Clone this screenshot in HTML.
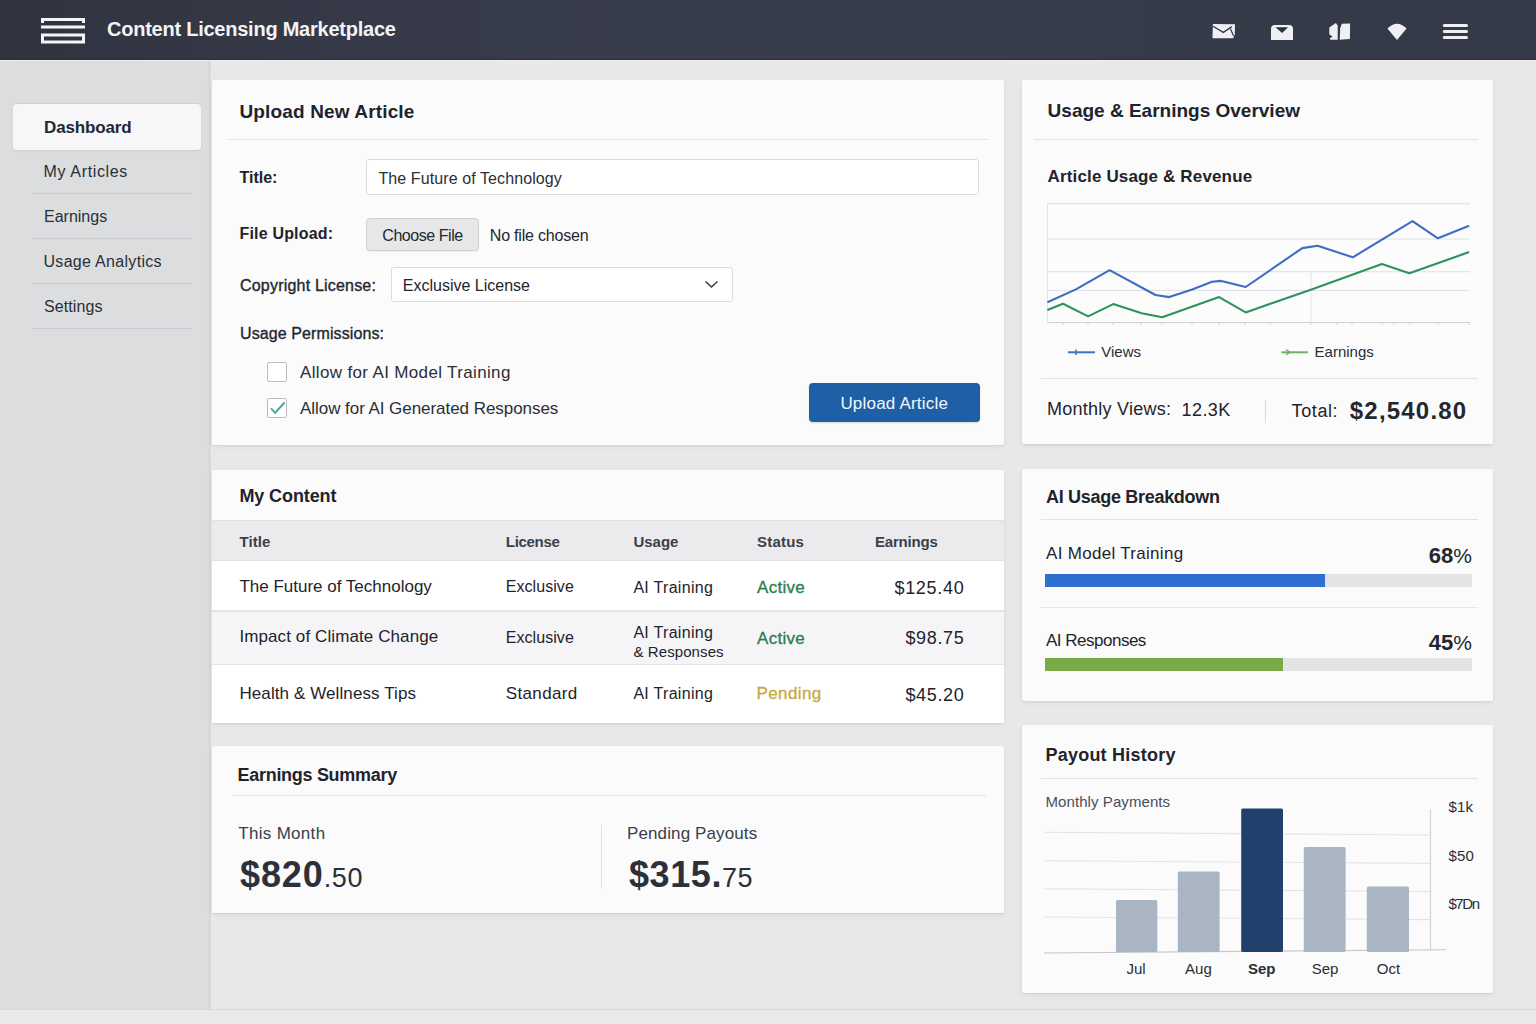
<!DOCTYPE html>
<html><head><meta charset="utf-8"><title>Content Licensing Marketplace</title>
<style>
html,body{margin:0;padding:0;}
body{width:1536px;height:1024px;position:relative;overflow:hidden;background:#e7e8eb;font-family:"Liberation Sans",sans-serif;}
.t{position:absolute;white-space:nowrap;}
.r{position:absolute;}
</style></head><body>
<div class="r" style="left:0px;top:60px;width:211px;height:950px;background:#dcdddf;"></div>
<div class="r" style="left:208px;top:60px;width:3px;height:950px;background:#d8d9db;"></div>
<div class="r" style="left:211px;top:60px;width:2px;height:950px;background:#eaeaec;"></div>
<div class="r" style="left:213px;top:60px;width:1323px;height:950px;background:#e8e8ea;"></div>
<div class="r" style="left:0px;top:1009px;width:1536px;height:1.2px;background:#d9d9dc;"></div>
<div class="r" style="left:0px;top:1010px;width:1536px;height:14px;background:#e9e9eb;"></div>
<div class="r" style="left:0px;top:0px;width:1536px;height:60px;background:linear-gradient(90deg,#30343f 0%,#363a48 25%,#383d4c 50%,#363b4a 75%,#343948 100%);border-bottom:1px solid #2a2e3a;box-sizing:border-box;"></div>
<div class="r" style="left:0px;top:60px;width:1536px;height:1px;background:#eff0f2;"></div>
<svg class="r" style="left:0;top:0" width="120" height="60"><g fill="#f4f5f7"><rect x="41" y="18" width="44" height="3"/><rect x="41" y="18" width="3" height="5"/><rect x="82" y="18" width="3" height="5"/><rect x="41" y="25.5" width="44" height="3"/></g><rect x="42.5" y="35" width="41" height="7" fill="none" stroke="#f4f5f7" stroke-width="3"/></svg>
<div class="t" style="left:107px;top:15.67px;font-size:20px;line-height:26px;color:#f2f3f5;font-weight:700;letter-spacing:-0.24px;">Content Licensing Marketplace</div>
<svg class="r" style="left:1200px;top:0" width="336" height="60"><g fill="#eef0f3"><path d="M12.9 24 L35 24.3 L34.8 34.2 L33.2 38.2 L12.5 38.2 Z"/><path d="M13 26.3 L23.3 32.4 L31.9 26.6" fill="none" stroke="#353a48" stroke-width="1.3"/><path d="M30.4 28.8 L33.6 36" fill="none" stroke="#353a48" stroke-width="1.2"/><path d="M71 40 L71 29 Q71 25 75 25 L89 25 Q93 25 93 29 L93 40 Z"/><path d="M75.4 27.3 L88 27.3 L82.2 33.1 Z" fill="#2b303c"/><path d="M135.9 23.1 L137.7 25.6 L137.7 39.8 L130.3 39.8 L129.8 38.3 L132.6 36.8 L129.3 34.2 L129.3 27.4 Z"/><path d="M141.8 23.8 L150.1 23.6 L149.9 39.1 L139.7 39.8 L140.2 28.2 Z"/><path d="M187.4 28.5 Q197 19 206.6 28.5 L197 40 Z"/><rect x="242.8" y="24" width="25.2" height="3" rx="1.5"/><rect x="242.8" y="30" width="25.2" height="3" rx="1.5"/><rect x="242.8" y="36" width="25.2" height="3" rx="1.5"/></g></svg>
<div class="r" style="left:13px;top:104px;width:188px;height:46px;background:#f7f7f9;border-radius:4px;box-shadow:0 -1px 1px rgba(0,0,0,0.06),0 1px 2px rgba(0,0,0,0.08);"></div>
<div class="t" style="left:44px;top:116.81px;font-size:17px;line-height:22px;color:#23272f;font-weight:700;letter-spacing:-0.15px;">Dashboard</div>
<div class="t" style="left:43.5px;top:161.36px;font-size:16px;line-height:21px;color:#2a2e36;letter-spacing:0.65px;">My Articles</div>
<div class="t" style="left:44px;top:206.16px;font-size:16px;line-height:21px;color:#2a2e36;">Earnings</div>
<div class="t" style="left:43.5px;top:250.96px;font-size:16px;line-height:21px;color:#2a2e36;letter-spacing:0.3px;">Usage Analytics</div>
<div class="t" style="left:44px;top:295.96px;font-size:16px;line-height:21px;color:#2a2e36;letter-spacing:0.1px;">Settings</div>
<div class="r" style="left:32px;top:193px;width:160px;height:1.2px;background:#cbccd0;"></div>
<div class="r" style="left:32px;top:238px;width:160px;height:1.2px;background:#cbccd0;"></div>
<div class="r" style="left:32px;top:283px;width:160px;height:1.2px;background:#cbccd0;"></div>
<div class="r" style="left:32px;top:328px;width:160px;height:1.2px;background:#cbccd0;"></div>
<div class="r" style="left:212px;top:80px;width:792px;height:365px;background:#fbfbfb;box-shadow:0 1px 2px rgba(0,0,0,0.07),0 2px 6px rgba(0,0,0,0.05);border-radius:2px;"></div>
<div class="t" style="left:239.5px;top:99.12px;font-size:19px;line-height:25px;color:#1f232b;font-weight:700;letter-spacing:0.14px;">Upload New Article</div>
<div class="r" style="left:227px;top:138.5px;width:761px;height:1.2px;background:#e3e3e6;"></div>
<div class="t" style="left:239.5px;top:167.26px;font-size:16px;line-height:21px;color:#1f232b;font-weight:700;">Title:</div>
<div class="r" style="left:366px;top:159px;width:613px;height:36px;background:#ffffff;border:1px solid #dadbde;border-radius:3px;box-sizing:border-box;"></div>
<div class="t" style="left:378.4px;top:167.76px;font-size:16px;line-height:21px;color:#2a2e36;letter-spacing:0.1px;">The Future of Technology</div>
<div class="t" style="left:239.5px;top:223.26px;font-size:16px;line-height:21px;color:#1f232b;font-weight:700;letter-spacing:0.18px;">File Upload:</div>
<div class="r" style="left:366px;top:218px;width:113px;height:33px;background:#e7e7e9;border:1px solid #d0d0d3;box-shadow:0 1px 1px rgba(0,0,0,0.06);border-radius:4px;box-sizing:border-box;"></div>
<div class="t" style="left:382.3px;top:224.56px;font-size:16px;line-height:21px;color:#23272f;letter-spacing:-0.45px;">Choose File</div>
<div class="t" style="left:489.8px;top:224.56px;font-size:16px;line-height:21px;color:#23272f;letter-spacing:-0.2px;">No file chosen</div>
<div class="t" style="left:240px;top:275.16px;font-size:16px;line-height:21px;color:#23272f;letter-spacing:0.2px;-webkit-text-stroke:0.35px #23272f;">Copyright License:</div>
<div class="r" style="left:391px;top:267px;width:342px;height:35px;background:#ffffff;border:1px solid #dadbde;border-radius:3px;box-sizing:border-box;"></div>
<div class="t" style="left:402.8px;top:274.76px;font-size:16px;line-height:21px;color:#1f232b;">Exclusive License</div>
<svg class="r" style="left:700px;top:275px" width="24" height="20"><path d="M5.5 6.5 L11.5 12 L17.5 6.5" fill="none" stroke="#3a3f48" stroke-width="1.6"/></svg>
<div class="t" style="left:240px;top:323.36px;font-size:16px;line-height:21px;color:#23272f;letter-spacing:0.1px;-webkit-text-stroke:0.35px #23272f;">Usage Permissions:</div>
<div class="r" style="left:267px;top:362px;width:20px;height:20px;background:#ffffff;border:1px solid #b9bbc0;border-radius:2px;box-sizing:border-box;"></div>
<div class="t" style="left:300px;top:361.91px;font-size:17px;line-height:22px;color:#2a2e36;letter-spacing:0.35px;">Allow for AI Model Training</div>
<div class="r" style="left:267px;top:398px;width:20px;height:20px;background:#ffffff;border:1px solid #b9bbc0;border-radius:2px;box-sizing:border-box;"></div>
<svg class="r" style="left:267px;top:398px" width="20" height="20"><path d="M4 10.3 L8.2 14.8 L17.5 4.5" fill="none" stroke="#45a596" stroke-width="1.9"/></svg>
<div class="t" style="left:300px;top:398.11px;font-size:17px;line-height:22px;color:#2a2e36;letter-spacing:-0.05px;">Allow for AI Generated Responses</div>
<div class="r" style="left:809px;top:383px;width:171px;height:38.5px;background:#1f5fa6;border-radius:4px;box-shadow:0 1px 2px rgba(0,0,0,0.15);"></div>
<div class="t" style="left:840.4px;top:392.51px;font-size:17px;line-height:22px;color:#f4f7fb;letter-spacing:0.2px;">Upload Article</div>
<div class="r" style="left:1021.5px;top:80px;width:471px;height:364px;background:#fbfbfb;box-shadow:0 1px 2px rgba(0,0,0,0.07),0 2px 6px rgba(0,0,0,0.05);border-radius:2px;"></div>
<div class="t" style="left:1047.6px;top:98.32px;font-size:19px;line-height:25px;color:#1f232b;font-weight:700;">Usage &amp; Earnings Overview</div>
<div class="r" style="left:1034px;top:139px;width:444px;height:1.2px;background:#e3e3e6;"></div>
<div class="t" style="left:1047.6px;top:165.71px;font-size:17px;line-height:22px;color:#1f232b;font-weight:700;letter-spacing:0.15px;">Article Usage &amp; Revenue</div>
<svg class="r" style="left:1030px;top:190px" width="460" height="150"><rect x="17.4" y="13.8" width="422.6" height="118.7" fill="#fcfcfd"/><line x1="17.4" x2="440" y1="13.800000000000011" y2="13.800000000000011" stroke="#dfe0e3" stroke-width="1"/><line x1="17.4" x2="440" y1="49" y2="49" stroke="#dfe0e3" stroke-width="1"/><line x1="17.4" x2="440" y1="81.69999999999999" y2="81.69999999999999" stroke="#dfe0e3" stroke-width="1"/><line x1="17.4" x2="440" y1="100.39999999999998" y2="100.39999999999998" stroke="#dfe0e3" stroke-width="1"/><line x1="17.4" x2="17.4" y1="13.8" y2="132.5" stroke="#dfe0e3" stroke-width="1"/><line x1="281" x2="281" y1="81" y2="132.5" stroke="#e4e5e8" stroke-width="1"/><line x1="17.4" x2="440" y1="132.5" y2="132.5" stroke="#cfd0d4" stroke-width="1.2"/><line x1="33" x2="33" y1="132.5" y2="135" stroke="#d5d6da" stroke-width="1"/><line x1="58" x2="58" y1="132.5" y2="135" stroke="#d5d6da" stroke-width="1"/><line x1="83" x2="83" y1="132.5" y2="135" stroke="#d5d6da" stroke-width="1"/><line x1="111" x2="111" y1="132.5" y2="135" stroke="#d5d6da" stroke-width="1"/><line x1="132" x2="132" y1="132.5" y2="135" stroke="#d5d6da" stroke-width="1"/><line x1="162" x2="162" y1="132.5" y2="135" stroke="#d5d6da" stroke-width="1"/><line x1="189" x2="189" y1="132.5" y2="135" stroke="#d5d6da" stroke-width="1"/><line x1="215" x2="215" y1="132.5" y2="135" stroke="#d5d6da" stroke-width="1"/><line x1="240" x2="240" y1="132.5" y2="135" stroke="#d5d6da" stroke-width="1"/><line x1="281" x2="281" y1="132.5" y2="135" stroke="#d5d6da" stroke-width="1"/><line x1="307" x2="307" y1="132.5" y2="135" stroke="#d5d6da" stroke-width="1"/><line x1="322" x2="322" y1="132.5" y2="135" stroke="#d5d6da" stroke-width="1"/><line x1="352" x2="352" y1="132.5" y2="135" stroke="#d5d6da" stroke-width="1"/><line x1="364" x2="364" y1="132.5" y2="135" stroke="#d5d6da" stroke-width="1"/><line x1="380" x2="380" y1="132.5" y2="135" stroke="#d5d6da" stroke-width="1"/><line x1="408" x2="408" y1="132.5" y2="135" stroke="#d5d6da" stroke-width="1"/><line x1="439" x2="439" y1="132.5" y2="135" stroke="#d5d6da" stroke-width="1"/><polyline points="17.4,112.3 45.9,99.4 79.6,80.2 125.5,105.0 139.2,107.1 162.2,99.4 182.0,91.8 191.3,90.9 215.7,97.0 272.3,58.1 287.6,55.7 322.8,67.3 382.5,31.2 407.9,48.3 439.1,35.8" fill="none" stroke="#3b6ec2" stroke-width="2.1" stroke-linejoin="round"/><polyline points="17.4,120.0 33.0,113.8 58.1,126.4 83.2,114.1 111.7,123.3 132.2,127.3 189.1,107.1 215.7,122.4 281.5,99.4 351.9,74.0 379.4,83.2 439.1,62.1" fill="none" stroke="#2b935e" stroke-width="2.1" stroke-linejoin="round"/></svg>
<svg class="r" style="left:1060px;top:340px" width="340" height="25"><line x1="8" x2="35" y1="12.3" y2="12.3" stroke="#3d72c6" stroke-width="2"/><line x1="16" x2="16" y1="9.5" y2="15" stroke="#3d72c6" stroke-width="1.5"/><line x1="221.5" x2="247.8" y1="12.3" y2="12.3" stroke="#6fb065" stroke-width="2"/><path d="M226 9.5 L230 12.3 L226 15" fill="none" stroke="#6fb065" stroke-width="1.3"/></svg>
<div class="t" style="left:1101.3px;top:342.30px;font-size:15px;line-height:20px;color:#2a2e36;">Views</div>
<div class="t" style="left:1314.6px;top:342.30px;font-size:15px;line-height:20px;color:#2a2e36;">Earnings</div>
<div class="r" style="left:1041px;top:378px;width:437px;height:1.2px;background:#e3e3e6;"></div>
<div class="t" style="left:1047px;top:397.96px;font-size:18px;line-height:23px;color:#1f232b;letter-spacing:0.25px;">Monthly Views:</div>
<div class="t" style="left:1181.5px;top:399.46px;font-size:18px;line-height:23px;color:#1f232b;letter-spacing:0.45px;">12.3K</div>
<div class="r" style="left:1265px;top:400px;width:1px;height:23px;background:#d9dadd;"></div>
<div class="t" style="left:1291.6px;top:400.06px;font-size:18px;line-height:23px;color:#1f232b;letter-spacing:0.6px;">Total:</div>
<div class="t" style="left:1349.8px;top:394.88px;font-size:24px;line-height:31px;color:#23272f;font-weight:700;letter-spacing:1.2px;">$2,540.80</div>
<div class="r" style="left:212px;top:470px;width:792px;height:253px;background:#fbfbfb;box-shadow:0 1px 2px rgba(0,0,0,0.07),0 2px 6px rgba(0,0,0,0.05);border-radius:2px;overflow:hidden;"></div>
<div class="t" style="left:239.4px;top:484.66px;font-size:18px;line-height:23px;color:#1f232b;font-weight:700;letter-spacing:-0.1px;">My Content</div>
<div class="r" style="left:212px;top:519.5px;width:792px;height:41px;background:#ebebee;border-top:1px solid #e1e1e4;border-bottom:1px solid #e1e1e4;box-sizing:border-box;"></div>
<div class="t" style="left:239.4px;top:531.50px;font-size:15px;line-height:20px;color:#3a404b;font-weight:700;letter-spacing:0.1px;">Title</div>
<div class="t" style="left:505.8px;top:531.50px;font-size:15px;line-height:20px;color:#3a404b;font-weight:700;letter-spacing:-0.3px;">License</div>
<div class="t" style="left:633.4px;top:531.50px;font-size:15px;line-height:20px;color:#3a404b;font-weight:700;">Usage</div>
<div class="t" style="left:757px;top:531.50px;font-size:15px;line-height:20px;color:#3a404b;font-weight:700;letter-spacing:0.2px;">Status</div>
<div class="t" style="left:875px;top:531.50px;font-size:15px;line-height:20px;color:#3a404b;font-weight:700;letter-spacing:-0.2px;">Earnings</div>
<div class="r" style="left:212px;top:560.5px;width:792px;height:49.5px;background:#ffffff;"></div>
<div class="r" style="left:212px;top:610px;width:792px;height:1.5px;background:#e4e4e7;"></div>
<div class="r" style="left:212px;top:611.5px;width:792px;height:52px;background:#f5f5f7;"></div>
<div class="r" style="left:212px;top:663.5px;width:792px;height:1.5px;background:#e4e4e7;"></div>
<div class="r" style="left:212px;top:665px;width:792px;height:58px;background:#ffffff;"></div>
<div class="t" style="left:239.4px;top:575.61px;font-size:17px;line-height:22px;color:#1f232b;">The Future of Technology</div>
<div class="t" style="left:505.8px;top:576.46px;font-size:16px;line-height:21px;color:#1f232b;letter-spacing:0.05px;">Exclusive</div>
<div class="t" style="left:633.4px;top:576.76px;font-size:16px;line-height:21px;color:#1f232b;letter-spacing:0.3px;">AI Training</div>
<div class="t" style="left:757px;top:576.61px;font-size:17px;line-height:22px;color:#2b7d4f;letter-spacing:0.3px;-webkit-text-stroke:0.3px #2b7d4f;">Active</div>
<div class="t" style="right:571.6px;top:576.56px;font-size:18px;line-height:23px;color:#1f232b;letter-spacing:0.7px;">$125.40</div>
<div class="t" style="left:239.4px;top:626.31px;font-size:17px;line-height:22px;color:#1f232b;letter-spacing:0.1px;">Impact of Climate Change</div>
<div class="t" style="left:505.8px;top:627.16px;font-size:16px;line-height:21px;color:#1f232b;letter-spacing:0.05px;">Exclusive</div>
<div class="t" style="left:633.4px;top:621.56px;font-size:16px;line-height:21px;color:#1f232b;letter-spacing:0.3px;">AI Training</div>
<div class="t" style="left:633.4px;top:641.60px;font-size:15px;line-height:20px;color:#1f232b;letter-spacing:0.1px;">&amp; Responses</div>
<div class="t" style="left:757px;top:627.91px;font-size:17px;line-height:22px;color:#2b7d4f;letter-spacing:0.3px;-webkit-text-stroke:0.3px #2b7d4f;">Active</div>
<div class="t" style="right:571.6px;top:627.26px;font-size:18px;line-height:23px;color:#1f232b;letter-spacing:0.65px;">$98.75</div>
<div class="t" style="left:239.4px;top:682.91px;font-size:17px;line-height:22px;color:#1f232b;letter-spacing:0.1px;">Health &amp; Wellness Tips</div>
<div class="t" style="left:505.8px;top:682.91px;font-size:17px;line-height:22px;color:#1f232b;letter-spacing:0.35px;">Standard</div>
<div class="t" style="left:633.4px;top:683.46px;font-size:16px;line-height:21px;color:#1f232b;letter-spacing:0.3px;">AI Training</div>
<div class="t" style="left:756.5px;top:683.11px;font-size:17px;line-height:22px;color:#c8a745;letter-spacing:0.4px;-webkit-text-stroke:0.3px #c8a745;">Pending</div>
<div class="t" style="right:571.6px;top:683.56px;font-size:18px;line-height:23px;color:#1f232b;letter-spacing:0.65px;">$45.20</div>
<div class="r" style="left:212px;top:746px;width:792px;height:167px;background:#fbfbfb;box-shadow:0 1px 2px rgba(0,0,0,0.07),0 2px 6px rgba(0,0,0,0.05);border-radius:2px;"></div>
<div class="t" style="left:237.6px;top:764.16px;font-size:18px;line-height:23px;color:#1f232b;font-weight:700;letter-spacing:-0.3px;">Earnings Summary</div>
<div class="r" style="left:232px;top:794.5px;width:754px;height:1.2px;background:#e3e3e6;"></div>
<div class="t" style="left:238.3px;top:822.81px;font-size:17px;line-height:22px;color:#3a3f4a;letter-spacing:0.3px;">This Month</div>
<div class="t" style="left:240px;top:851.03px;font-size:36px;line-height:47px;color:#2b303b;"><span style="font-size:36px;font-weight:700;letter-spacing:0.9px">$820</span><span style="font-size:27px;letter-spacing:0.6px">.50</span></div>
<div class="r" style="left:601px;top:825px;width:1.2px;height:64px;background:#e0e1e4;"></div>
<div class="t" style="left:627px;top:823.11px;font-size:17px;line-height:22px;color:#3a3f4a;letter-spacing:0.12px;">Pending Payouts</div>
<div class="t" style="left:629px;top:851.03px;font-size:36px;line-height:47px;color:#2b303b;"><span style="font-size:36px;font-weight:700;letter-spacing:0.6px">$315.</span><span style="font-size:27px;letter-spacing:0.3px">75</span></div>
<div class="r" style="left:1022px;top:469px;width:471px;height:231.5px;background:#fbfbfb;box-shadow:0 1px 2px rgba(0,0,0,0.07),0 2px 6px rgba(0,0,0,0.05);border-radius:2px;"></div>
<div class="t" style="left:1046px;top:486.06px;font-size:18px;line-height:23px;color:#1f232b;font-weight:700;letter-spacing:-0.3px;">AI Usage Breakdown</div>
<div class="r" style="left:1041px;top:518.5px;width:437px;height:1.2px;background:#e3e3e6;"></div>
<div class="t" style="left:1046px;top:543.11px;font-size:17px;line-height:22px;color:#1f232b;letter-spacing:0.3px;">AI Model Training</div>
<div class="t" style="right:64px;top:541px;line-height:30px;color:#23272f;"><span style="font-size:22px;font-weight:700">68</span><span style="font-size:21px">%</span></div>
<div class="r" style="left:1045.3px;top:573.7px;width:427px;height:13px;background:#e3e4e6;"></div>
<div class="r" style="left:1045.3px;top:573.7px;width:279.7px;height:13px;background:#2f6fd1;"></div>
<div class="r" style="left:1041px;top:607px;width:437px;height:1.2px;background:#e6e6e9;"></div>
<div class="t" style="left:1046px;top:629.71px;font-size:17px;line-height:22px;color:#1f232b;letter-spacing:-0.5px;">AI Responses</div>
<div class="t" style="right:64px;top:628px;line-height:30px;color:#23272f;"><span style="font-size:22px;font-weight:700">45</span><span style="font-size:21px">%</span></div>
<div class="r" style="left:1045.3px;top:658px;width:427px;height:12.6px;background:#e3e4e6;"></div>
<div class="r" style="left:1045.3px;top:658px;width:237.7px;height:12.6px;background:#78aa46;"></div>
<div class="r" style="left:1022px;top:724.5px;width:471px;height:268px;background:#fbfbfb;box-shadow:0 1px 2px rgba(0,0,0,0.07),0 2px 6px rgba(0,0,0,0.05);border-radius:2px;"></div>
<div class="t" style="left:1045.5px;top:743.66px;font-size:18px;line-height:23px;color:#1f232b;font-weight:700;letter-spacing:0.22px;">Payout History</div>
<div class="r" style="left:1041px;top:778px;width:437px;height:1.2px;background:#e3e3e6;"></div>
<div class="t" style="left:1045.5px;top:791.70px;font-size:15px;line-height:20px;color:#4a4f58;letter-spacing:0.08px;">Monthly Payments</div>
<svg class="r" style="left:1030px;top:790px" width="460" height="200"><line x1="14" x2="400.5" y1="42.299999999999955" y2="45" stroke="#e4e4e7" stroke-width="1.1"/><line x1="14" x2="400.5" y1="70.70000000000005" y2="73.39999999999998" stroke="#e4e4e7" stroke-width="1.1"/><line x1="14" x2="400.5" y1="98.79999999999995" y2="101.5" stroke="#e4e4e7" stroke-width="1.1"/><line x1="14" x2="400.5" y1="127" y2="129.60000000000002" stroke="#e4e4e7" stroke-width="1.1"/><line x1="14" x2="416.6" y1="163" y2="159.7" stroke="#c6c7ca" stroke-width="1.1"/><line x1="400.5" x2="400.5" y1="19" y2="160" stroke="#d2d3d6" stroke-width="1.2"/><rect x="86" y="110" width="41.299999999999955" height="52" fill="#a9b5c2" rx="1.5"/><rect x="147.79999999999995" y="81.60000000000002" width="41.799999999999955" height="80.39999999999998" fill="#a9b5c2" rx="1.5"/><rect x="211.20000000000005" y="18.600000000000023" width="41.799999999999955" height="143.39999999999998" fill="#21416c" rx="1.5"/><rect x="273.79999999999995" y="57" width="41.799999999999955" height="105" fill="#a9b5c2" rx="1.5"/><rect x="336.79999999999995" y="96.39999999999998" width="42.200000000000045" height="65.60000000000002" fill="#a9b5c2" rx="1.5"/></svg>
<div class="t" style="left:1448.4px;top:796.50px;font-size:15px;line-height:20px;color:#2a2e36;letter-spacing:0.2px;">$1k</div>
<div class="t" style="left:1448.4px;top:845.50px;font-size:15px;line-height:20px;color:#2a2e36;letter-spacing:0.2px;">$50</div>
<div class="t" style="left:1448.4px;top:894.10px;font-size:15px;line-height:20px;color:#2a2e36;letter-spacing:-1.4px;">$7Dn</div>
<div class="t" style="left:1096px;width:80px;text-align:center;top:958.50px;font-size:15px;line-height:20px;color:#2a2e36;font-weight:400">Jul</div>
<div class="t" style="left:1158.4px;width:80px;text-align:center;top:958.50px;font-size:15px;line-height:20px;color:#2a2e36;font-weight:400">Aug</div>
<div class="t" style="left:1221.7px;width:80px;text-align:center;top:958.50px;font-size:15px;line-height:20px;color:#2a2e36;font-weight:700">Sep</div>
<div class="t" style="left:1285px;width:80px;text-align:center;top:958.50px;font-size:15px;line-height:20px;color:#2a2e36;font-weight:400">Sep</div>
<div class="t" style="left:1348.4px;width:80px;text-align:center;top:958.50px;font-size:15px;line-height:20px;color:#2a2e36;font-weight:400">Oct</div>
</body></html>
